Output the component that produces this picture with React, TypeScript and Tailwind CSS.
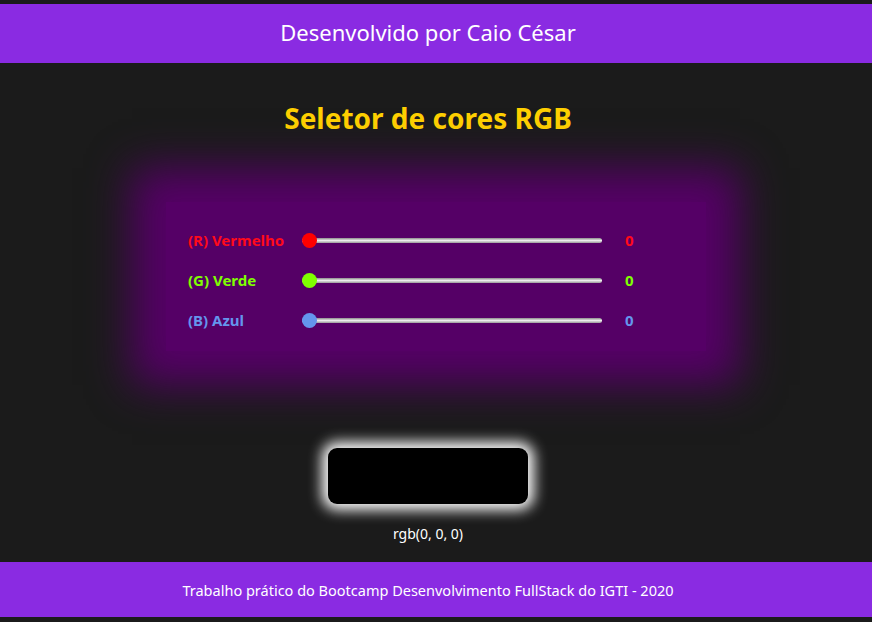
import React from "react";

const channels = [
  { label: "(R) Vermelho", color: "text-[#ff0a1a]", thumb: "bg-[#ff0000]" },
  { label: "(G) Verde", color: "text-[#7fff00]", thumb: "bg-[#7fff00]" },
  { label: "(B) Azul", color: "text-[#6495ed]", thumb: "bg-[#6495ed]" },
];

function Slider({ thumb }: { thumb: string }) {
  return (
    <div className="relative flex h-[16px] w-[300px] items-center">
      <div className="h-[5px] w-full rounded-full bg-gradient-to-b from-[#8c8c8c] via-[#ececec] to-[#9a9a9a]" />
      <div className={`absolute left-0 top-[1px] h-[15px] w-[15px] rounded-full ${thumb}`} />
    </div>
  );
}

export default function App() {
  return (
    <div
      className="flex min-h-screen flex-col bg-[#1b1b1b] pt-[4px]"
      style={{ fontFamily: '"Noto Sans", "Open Sans", sans-serif' }}
    >
      <header className="flex h-[59px] items-center justify-center bg-[#8a2be2] pb-[2px] pr-4 text-[22px] text-white">
        Desenvolvido por Caio César
      </header>

      <main className="flex flex-col items-center">
        <h1 className="mr-4 mt-[37px] text-[28px] font-bold leading-[36px] text-[#ffd000]">
          Seletor de cores RGB
        </h1>

        {/* RGB controls panel, glow comes from the shadow */}
        <div className="mt-[66px] flex h-[149px] w-[540px] flex-col bg-[#550066] pb-[11px] pl-[22px] pt-[18px] shadow-[0_0_40px_34px_#550066]">
          {channels.map((c) => (
            <div key={c.label} className="flex h-[40px] items-center">
              <span className={`w-[114px] text-[15px] font-bold ${c.color}`}>{c.label}</span>
              <Slider thumb={c.thumb} />
              <span className={`ml-[23px] text-[15px] font-bold ${c.color}`}>0</span>
            </div>
          ))}
        </div>

        {/* preview */}
        <div className="mr-4 mt-[97px] h-[56px] w-[200px] rounded-[9px] bg-black shadow-[0_0_14px_6px_#ffffff]" />
        <p className="mr-4 mt-[21px] text-[14px] leading-[18px] text-white">rgb(0, 0, 0)</p>
      </main>

      <footer className="mt-[19px] flex h-[55px] items-center justify-center bg-[#8a2be2] pr-4 pt-[3px] text-[14.5px] text-white">
        Trabalho prático do Bootcamp Desenvolvimento FullStack do IGTI - 2020
      </footer>
    </div>
  );
}
